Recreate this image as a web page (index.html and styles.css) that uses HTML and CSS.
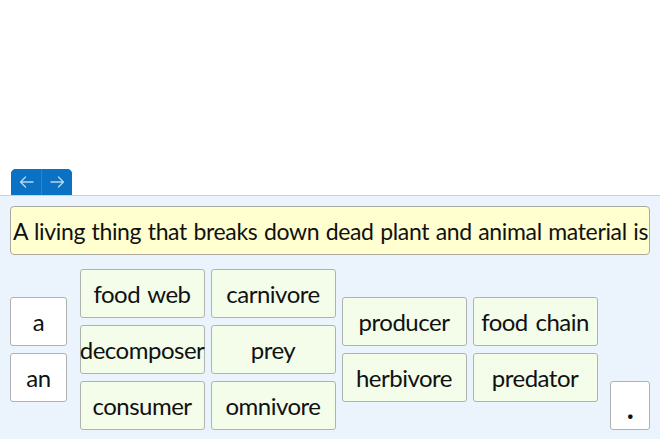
FILE: index.html
```html
<!DOCTYPE html>
<html lang="en">

<head>
    <meta charset="UTF-8">
    <meta name="viewport" content="width=device-width, initial-scale=1.0">
    <title>Sentence Builder</title>
    <link rel="stylesheet" href="styles.css">
</head>

<body>
    <div class="nav">
        <button class="nav-btn" aria-label="Back">
            <svg width="15" height="12" viewBox="0 0 15 12"><path d="M14 6H1.5M6.5 1L1.5 6l5 5" fill="none" stroke="currentColor" stroke-width="1.4" stroke-linecap="round" stroke-linejoin="round"/></svg>
        </button>
        <button class="nav-btn" aria-label="Next">
            <svg width="15" height="12" viewBox="0 0 15 12"><path d="M1 6h12.5M8.5 1l5 5-5 5" fill="none" stroke="currentColor" stroke-width="1.4" stroke-linecap="round" stroke-linejoin="round"/></svg>
        </button>
    </div>

    <div class="panel">
        <div class="sentence">A living thing that breaks down dead plant and animal material is</div>

        <div class="tiles">
            <div class="col">
                <div class="tile plain small">a</div>
                <div class="tile plain small">an</div>
            </div>
            <div class="words">
                <div class="col">
                    <div class="tile">food web</div>
                    <div class="tile">decomposer</div>
                    <div class="tile">consumer</div>
                </div>
                <div class="col">
                    <div class="tile">carnivore</div>
                    <div class="tile">prey</div>
                    <div class="tile">omnivore</div>
                </div>
                <div class="col">
                    <div class="tile">producer</div>
                    <div class="tile">herbivore</div>
                </div>
                <div class="col">
                    <div class="tile">food chain</div>
                    <div class="tile">predator</div>
                </div>
            </div>
            <div class="col end">
                <div class="tile plain dot">.</div>
            </div>
        </div>
    </div>
</body>

</html>
```

FILE: styles.css
```css
body {
    margin: 0;
    font-family: Lato, "Open Sans", sans-serif;
    color: #111;
    background-color: #fff;
}

.nav {
    display: flex;
    margin: 169px 0 0 11px;
    width: 61px;
    height: 26px;
    border-radius: 5px 5px 0 0;
    overflow: hidden;
    background-color: #0a71c3;
}

.nav-btn {
    flex: 1;
    display: flex;
    align-items: center;
    justify-content: center;
    padding: 0;
    border: none;
    background-color: #0a71c3;
    color: #b3d6f2;
    cursor: pointer;
}

.nav-btn + .nav-btn {
    border-left: 1px solid #2a83cc;
}

.panel {
    background-color: #ebf3fd;
    border-top: 1px solid #c9d2de;
    padding: 10px 10px 0;
    height: 244px;
    box-sizing: border-box;
}

.sentence {
    height: 49px;
    box-sizing: border-box;
    border: 1px solid #a9a9a0;
    border-radius: 4px;
    background-color: #ffffcf;
    padding-left: 2px;
    font-size: 23px;
    line-height: 49px;
    letter-spacing: -0.35px;
    word-spacing: 1px;
    white-space: nowrap;
    overflow: hidden;
}

.tiles {
    display: flex;
    align-items: center;
    justify-content: space-between;
    margin-top: 14px;
    height: 161px;
}

.words {
    display: flex;
    align-items: center;
    gap: 6px;
}

.col {
    display: flex;
    flex-direction: column;
    gap: 7px;
}

.col.end {
    align-self: flex-end;
}

.tile {
    width: 125px;
    height: 49px;
    box-sizing: border-box;
    border: 1px solid #b0b3ad;
    border-radius: 3px;
    background-color: #f3fde9;
    display: flex;
    align-items: center;
    justify-content: center;
    font-size: 24px;
    letter-spacing: -0.5px;
    word-spacing: 2px;
    white-space: nowrap;
}

.tile.plain {
    background-color: #fff;
}

.tile.small {
    width: 57px;
}

.tile.dot {
    width: 40px;
    font-size: 30px;
    font-weight: bold;
    align-items: flex-end;
    padding-bottom: 4px;
}
```
